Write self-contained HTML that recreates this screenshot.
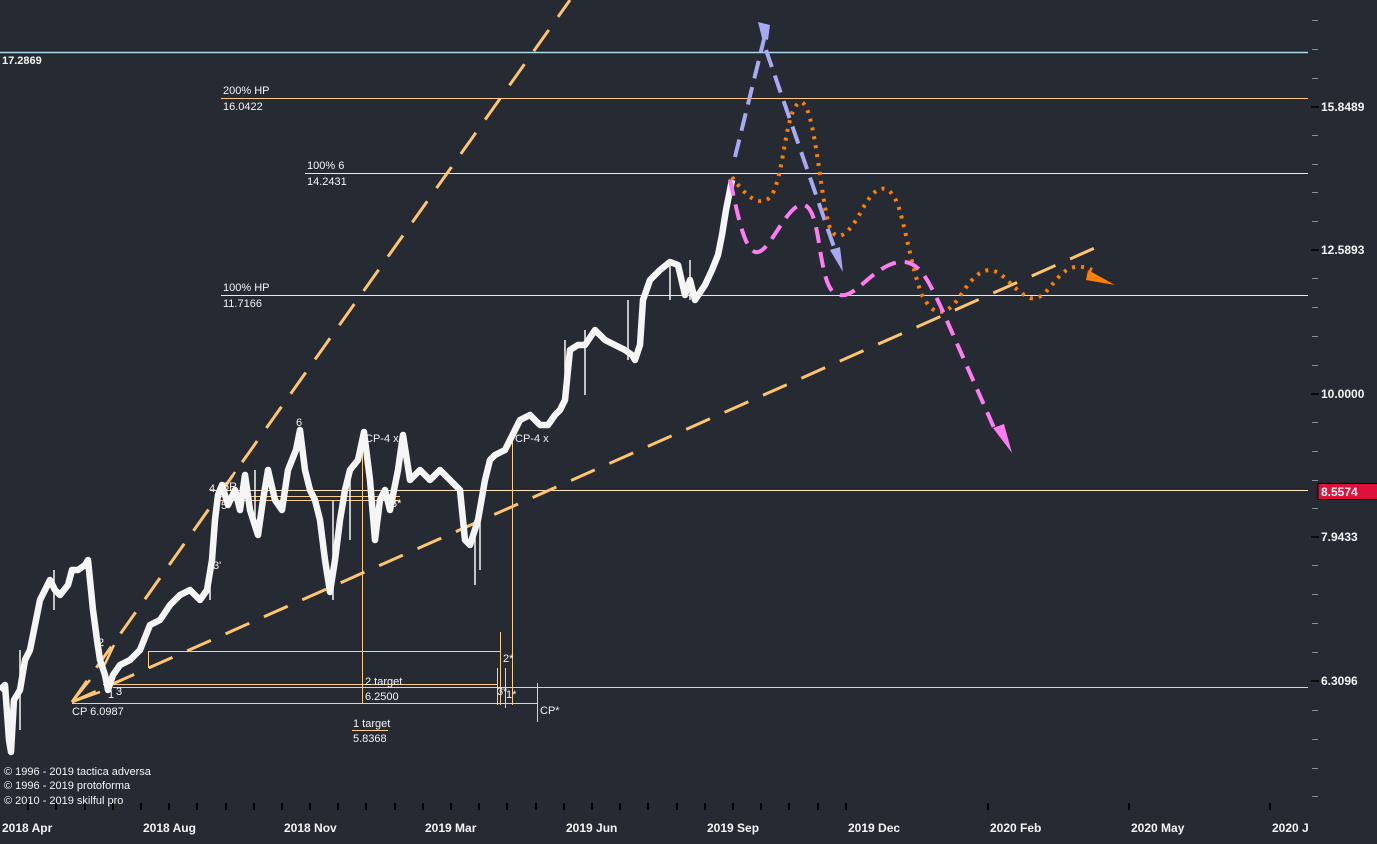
<!DOCTYPE html>
<html><head><meta charset="utf-8"><style>
html,body{margin:0;padding:0;background:#262a33;width:1377px;height:844px;overflow:hidden}
svg text{font-family:"Liberation Sans",sans-serif;font-size:11px;fill:#f4f4f4}
.b{font-weight:bold;font-size:12px}
</style></head><body>
<svg width="1377" height="844" viewBox="0 0 1377 844">
<rect width="1377" height="844" fill="#262a33"/>
<line x1="0" y1="52.5" x2="1308" y2="52.5" stroke="#a8dce6" stroke-width="1.5"/>
<line x1="221" y1="98.5" x2="1308" y2="98.5" stroke="#ffcc80"/>
<line x1="305" y1="173.5" x2="1308" y2="173.5" stroke="#ffe4c0"/>
<line x1="221" y1="295.5" x2="1308" y2="295.5" stroke="#ffe4c0"/>
<line x1="210" y1="490.5" x2="1308" y2="490.5" stroke="#ffe4c0"/>
<line x1="113" y1="687.5" x2="1308" y2="687.5" stroke="#ffcc80"/>
<g stroke="#ffcc80" stroke-width="1" fill="none">
<line x1="215" y1="496.5" x2="400" y2="496.5"/>
<line x1="215" y1="500.5" x2="400" y2="500.5"/>
<line x1="148" y1="651.5" x2="500" y2="651.5"/>
<line x1="103" y1="684.5" x2="497" y2="684.5"/>
<line x1="72" y1="703.5" x2="537" y2="703.5"/>
<line x1="352" y1="730.5" x2="388" y2="730.5"/>
<line x1="362.5" y1="430" x2="362.5" y2="703"/>
<line x1="500.5" y1="632" x2="500.5" y2="705"/>
<line x1="497.5" y1="668" x2="497.5" y2="705"/>
<line x1="505.5" y1="668" x2="505.5" y2="708"/>
<line x1="512.5" y1="430" x2="512.5" y2="705"/>
<line x1="537.5" y1="683" x2="537.5" y2="722"/>
<line x1="148.5" y1="651" x2="148.5" y2="668"/>
<line x1="103" y1="668" x2="114" y2="645" stroke-width="2.5"/>
<line x1="72" y1="702" x2="90" y2="680" stroke-width="2.5"/>
<line x1="72" y1="702" x2="100" y2="692" stroke-width="2.5"/>
<line x1="213" y1="545" x2="220" y2="495" stroke-width="1.5"/>
<line x1="220" y1="495" x2="235" y2="472" stroke-width="2.5"/>
</g>
<line x1="72" y1="702" x2="570" y2="0" stroke="#ffc46e" stroke-width="3" stroke-dasharray="26,16"/>
<line x1="72" y1="702" x2="1097" y2="247" stroke="#ffc46e" stroke-width="3" stroke-dasharray="26,16"/>
<polyline fill="none" stroke="#f5f5f5" stroke-width="6.5" stroke-linejoin="round" points="0,690 5,685 9,740 11,752 14,700 20,690 25,660 30,650 35,625 40,600 45,590 50,580 55,590 60,595 68,585 72,570 78,570 85,565 88,560 90,580 93,610 97,640 100,660 105,675 108,690 113,675 120,665 130,660 140,650 150,625 160,620 170,605 180,595 190,590 200,600 207,590 212,560 215,520 218,495 222,485 228,505 235,490 240,510 245,475 250,510 258,535 263,500 268,470 275,500 282,510 288,470 296,450 300,430 305,470 310,490 315,500 320,520 325,560 330,592 335,560 340,520 345,490 350,470 358,460 364,432 370,480 375,540 380,500 385,490 390,510 398,470 403,435 410,480 420,470 430,480 440,470 450,480 460,490 465,540 470,545 478,520 485,480 490,460 495,455 505,450 510,440 515,430 520,420 530,415 540,425 548,425 555,415 560,410 565,400 570,350 578,345 585,345 595,330 605,340 615,345 625,350 632,355 635,360 640,345 643,300 650,280 660,270 670,262 678,265 685,295 690,280 695,300 705,285 712,270 718,255 722,235 726,210 732,180"/>
<g stroke="#f5f5f5" stroke-width="1.5">
<line x1="20" y1="650" x2="20" y2="730"/><line x1="54" y1="570" x2="54" y2="610"/><line x1="210" y1="560" x2="210" y2="600"/>
<line x1="255" y1="470" x2="255" y2="530"/><line x1="333" y1="500" x2="333" y2="600"/><line x1="350" y1="470" x2="350" y2="540"/>
<line x1="475" y1="520" x2="475" y2="585"/><line x1="480" y1="510" x2="480" y2="570"/><line x1="565" y1="340" x2="565" y2="400"/><line x1="585" y1="330" x2="585" y2="395"/>
<line x1="628" y1="300" x2="628" y2="360"/><line x1="670" y1="262" x2="670" y2="300"/><line x1="690" y1="260" x2="690" y2="300"/>
</g>
<polyline fill="none" stroke="#a8a8f5" stroke-width="4" stroke-dasharray="18,9" points="735,157 765,35"/>
<polygon points="758,22 770,25 768,40 762,38" fill="#a8a8f5"/>
<polyline fill="none" stroke="#a8a8f5" stroke-width="4" stroke-dasharray="18,9" points="766,50 835,250"/>
<polygon points="830,250 840,247 843,272" fill="#a8a8f5"/>
<path d="M732,177 C745,195 760,210 772,195 C785,170 785,110 800,102 C815,100 820,200 830,228 C838,245 850,232 862,210 C875,185 888,180 898,205 C905,225 912,270 922,295 C930,310 940,320 955,303 C965,290 975,270 990,270 C1005,272 1012,290 1030,298 C1048,302 1055,270 1075,267 C1082,266 1088,268 1092,270" fill="none" stroke="#ff7f00" stroke-width="4" stroke-dasharray="3,6"/>
<polygon points="1088,270 1115,285 1086,280" fill="#ff7f00"/>
<path d="M730,180 C738,215 745,255 758,252 C770,250 785,210 800,205 C810,203 815,215 820,250 C826,285 830,297 845,295 C860,292 880,260 905,262 C920,264 928,280 940,305 L995,430" fill="none" stroke="#ff7cf2" stroke-width="4" stroke-dasharray="16,9"/>
<polygon points="993,428 1012,453 1004,424" fill="#ff7cf2"/>
<text x="2" y="64" class="b" style="font-size:11px">17.2869</text>
<text x="223" y="94">200% HP</text><text x="223" y="110">16.0422</text>
<text x="307" y="169">100% 6</text><text x="307" y="185">14.2431</text>
<text x="223" y="291">100% HP</text><text x="223" y="307">11.7166</text>
<text x="296" y="426" fill="#ffe4c0">6</text>
<text x="365" y="442">CP-4 x</text><text x="515" y="442">CP-4 x</text>
<text x="209" y="492">4</text><text x="223" y="490">5R</text><text x="221" y="509">5</text>
<text x="391" y="507">3*</text><text x="213" y="569">3'</text>
<text x="98" y="646">2</text><text x="108" y="698">1</text><text x="116" y="695">3</text>
<text x="72" y="715">CP 6.0987</text>
<text x="365" y="685">2 target</text><text x="365" y="700">6.2500</text>
<text x="353" y="727">1 target</text><text x="353" y="742">5.8368</text>
<text x="503" y="662">2*</text><text x="497" y="695">3*</text><text x="506" y="698">1*</text><text x="540" y="714">CP*</text>
<text x="4" y="775">© 1996 - 2019 tactica adversa</text>
<text x="4" y="789">© 1996 - 2019 protoforma</text>
<text x="4" y="804">© 2010 - 2019 skilful pro</text>
<g stroke="#8a8f98" stroke-width="1">
<line x1="1312" y1="20.5" x2="1318" y2="20.5"/><line x1="1312" y1="49.5" x2="1318" y2="49.5"/><line x1="1312" y1="78.5" x2="1318" y2="78.5"/>
<line x1="1312" y1="135.5" x2="1318" y2="135.5"/><line x1="1312" y1="164.5" x2="1318" y2="164.5"/><line x1="1312" y1="192.5" x2="1318" y2="192.5"/><line x1="1312" y1="221.5" x2="1318" y2="221.5"/>
<line x1="1312" y1="278.5" x2="1318" y2="278.5"/><line x1="1312" y1="307.5" x2="1318" y2="307.5"/><line x1="1312" y1="336.5" x2="1318" y2="336.5"/><line x1="1312" y1="365.5" x2="1318" y2="365.5"/>
<line x1="1312" y1="422.5" x2="1318" y2="422.5"/><line x1="1312" y1="451.5" x2="1318" y2="451.5"/><line x1="1312" y1="480.5" x2="1318" y2="480.5"/><line x1="1312" y1="508.5" x2="1318" y2="508.5"/>
<line x1="1312" y1="565.5" x2="1318" y2="565.5"/><line x1="1312" y1="594.5" x2="1318" y2="594.5"/><line x1="1312" y1="623.5" x2="1318" y2="623.5"/><line x1="1312" y1="652.5" x2="1318" y2="652.5"/>
<line x1="1312" y1="710.5" x2="1318" y2="710.5"/><line x1="1312" y1="739.5" x2="1318" y2="739.5"/><line x1="1312" y1="768.5" x2="1318" y2="768.5"/><line x1="1312" y1="796.5" x2="1318" y2="796.5"/>
</g>
<g stroke="#000" stroke-width="1.5">
<line x1="1311" y1="107" x2="1319" y2="107"/><line x1="1311" y1="250" x2="1319" y2="250"/><line x1="1311" y1="394" x2="1319" y2="394"/><line x1="1311" y1="537" x2="1319" y2="537"/><line x1="1311" y1="681" x2="1319" y2="681"/>
</g>
<text x="1321" y="111" class="b">15.8489</text>
<text x="1321" y="254" class="b">12.5893</text>
<text x="1321" y="398" class="b">10.0000</text>
<text x="1321" y="541" class="b">7.9433</text>
<text x="1321" y="685" class="b">6.3096</text>
<rect x="1318" y="483.5" width="68" height="16" fill="#e0103c" stroke="#000"/>
<text x="1321" y="496" class="b">8.5574</text>
<g stroke="#000" stroke-width="2">
<line x1="28" y1="803" x2="28" y2="810"/><line x1="56" y1="803" x2="56" y2="810"/><line x1="85" y1="803" x2="85" y2="810"/><line x1="113" y1="803" x2="113" y2="810"/><line x1="141" y1="803" x2="141" y2="810"/><line x1="169" y1="803" x2="169" y2="810"/><line x1="197" y1="803" x2="197" y2="810"/><line x1="226" y1="803" x2="226" y2="810"/><line x1="254" y1="803" x2="254" y2="810"/><line x1="282" y1="803" x2="282" y2="810"/><line x1="310" y1="803" x2="310" y2="810"/><line x1="338" y1="803" x2="338" y2="810"/><line x1="366" y1="803" x2="366" y2="810"/><line x1="395" y1="803" x2="395" y2="810"/><line x1="423" y1="803" x2="423" y2="810"/><line x1="451" y1="803" x2="451" y2="810"/><line x1="479" y1="803" x2="479" y2="810"/><line x1="507" y1="803" x2="507" y2="810"/><line x1="536" y1="803" x2="536" y2="810"/><line x1="564" y1="803" x2="564" y2="810"/><line x1="592" y1="803" x2="592" y2="810"/><line x1="620" y1="803" x2="620" y2="810"/><line x1="648" y1="803" x2="648" y2="810"/><line x1="677" y1="803" x2="677" y2="810"/><line x1="705" y1="803" x2="705" y2="810"/><line x1="733" y1="803" x2="733" y2="810"/><line x1="761" y1="803" x2="761" y2="810"/><line x1="789" y1="803" x2="789" y2="810"/><line x1="818" y1="803" x2="818" y2="810"/><line x1="846" y1="803" x2="846" y2="810"/><line x1="988" y1="803" x2="988" y2="810"/><line x1="1129" y1="803" x2="1129" y2="810"/><line x1="1270" y1="803" x2="1270" y2="810"/>
</g>
<text x="2" y="832" class="b">2018 Apr</text>
<text x="143" y="832" class="b">2018 Aug</text>
<text x="284" y="832" class="b">2018 Nov</text>
<text x="425" y="832" class="b">2019 Mar</text>
<text x="566" y="832" class="b">2019 Jun</text>
<text x="707" y="832" class="b">2019 Sep</text>
<text x="848" y="832" class="b">2019 Dec</text>
<text x="990" y="832" class="b">2020 Feb</text>
<text x="1131" y="832" class="b">2020 May</text>
<text x="1272" y="832" class="b">2020 J</text>
</svg>
</body></html>
